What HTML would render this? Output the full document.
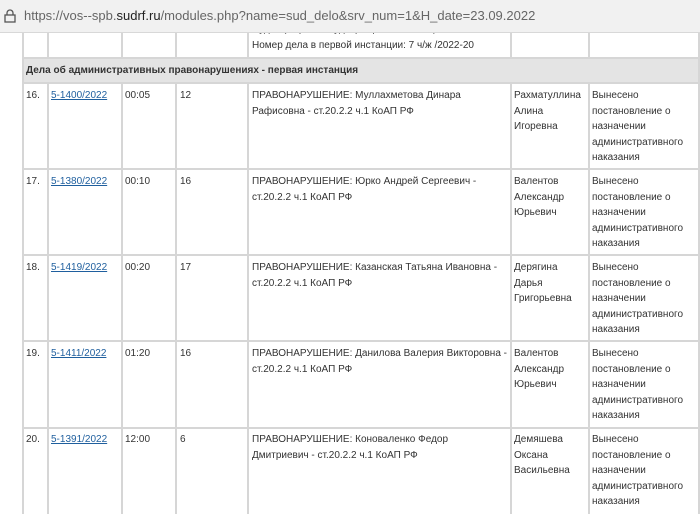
<!DOCTYPE html>
<html><head><meta charset="utf-8"><style>
*{margin:0;padding:0;box-sizing:border-box}
body{width:700px;height:514px;overflow:hidden;background:#fff;font-family:"Liberation Sans",Arial,sans-serif;font-size:10px;color:#333;position:relative}
.bar{position:absolute;left:0;top:0;width:700px;height:33px;background:#f1f1f1;border-bottom:1px solid #d8d8d8;z-index:1}
.url{position:absolute;left:24px;top:8px;font-size:13px;color:#666}
.url b{font-weight:normal;color:#222}
.v{position:absolute;width:2px;background:#d6d6d6}
.h{position:absolute;height:2px;background:#d6d6d6;left:22px;width:678px}
.c{position:absolute;line-height:15.5px}
a{color:#1f5f9e;text-decoration:underline}
.sec{position:absolute;left:22px;top:58px;width:678px;height:25px;background:#e4e4e4;font-weight:bold;padding:7px 4px;line-height:12px}
</style></head><body>
<div class="bar">
<svg style="position:absolute;left:4px;top:9px" width="12" height="14" viewBox="0 0 12 14"><rect x="1" y="6" width="10" height="7" fill="none" stroke="#555" stroke-width="1.3"/><path d="M3 6V4a3 3 0 0 1 6 0v2" fill="none" stroke="#555" stroke-width="1.3"/></svg>
<div class="url">https://vos--spb.<b>sudrf.ru</b>/modules.php?name=sud_delo&amp;srv_num=1&amp;H_date=23.09.2022</div>
</div>
<div class="sec">Дела об административных правонарушениях - первая инстанция</div>
<div class="c" style="left:252px;top:22px;color:#555">Судья (мировой судья) первой инстанции:</div>
<div class="c" style="left:252px;top:38px">Номер дела в первой инстанции: 7 ч/ж /2022-20</div>
<div class="v" style="left:22px;top:33px;height:481px"></div>
<div class="v" style="left:47px;top:33px;height:25px"></div>
<div class="v" style="left:121px;top:33px;height:25px"></div>
<div class="v" style="left:175px;top:33px;height:25px"></div>
<div class="v" style="left:247px;top:33px;height:25px"></div>
<div class="v" style="left:510px;top:33px;height:25px"></div>
<div class="v" style="left:588px;top:33px;height:25px"></div>
<div class="v" style="left:698px;top:33px;height:481px"></div>
<div class="h" style="top:57px"></div>
<div class="h" style="top:82px"></div>
<div class="v" style="left:47px;top:83px;height:431px"></div>
<div class="v" style="left:121px;top:83px;height:431px"></div>
<div class="v" style="left:175px;top:83px;height:431px"></div>
<div class="v" style="left:247px;top:83px;height:431px"></div>
<div class="v" style="left:510px;top:83px;height:431px"></div>
<div class="v" style="left:588px;top:83px;height:431px"></div>
<div class="h" style="top:168px"></div>
<div class="h" style="top:254px"></div>
<div class="h" style="top:340px"></div>
<div class="h" style="top:427px"></div>

<div class="c" style="left:26px;top:88px">16.</div>
<div class="c" style="left:51px;top:88px"><a>5-1400/2022</a></div>
<div class="c" style="left:125px;top:88px">00:05</div>
<div class="c" style="left:180px;top:88px">12</div>
<div class="c" style="left:252px;top:88px">ПРАВОНАРУШЕНИЕ: Муллахметова Динара<br>Рафисовна - ст.20.2.2 ч.1 КоАП РФ</div>
<div class="c" style="left:514px;top:88px">Рахматуллина<br>Алина<br>Игоревна</div>
<div class="c" style="left:592px;top:88px">Вынесено<br>постановление о<br>назначении<br>административного<br>наказания</div>

<div class="c" style="left:26px;top:174px">17.</div>
<div class="c" style="left:51px;top:174px"><a>5-1380/2022</a></div>
<div class="c" style="left:125px;top:174px">00:10</div>
<div class="c" style="left:180px;top:174px">16</div>
<div class="c" style="left:252px;top:174px">ПРАВОНАРУШЕНИЕ: Юрко Андрей Сергеевич -<br>ст.20.2.2 ч.1 КоАП РФ</div>
<div class="c" style="left:514px;top:174px">Валентов<br>Александр<br>Юрьевич</div>
<div class="c" style="left:592px;top:174px">Вынесено<br>постановление о<br>назначении<br>административного<br>наказания</div>

<div class="c" style="left:26px;top:260px">18.</div>
<div class="c" style="left:51px;top:260px"><a>5-1419/2022</a></div>
<div class="c" style="left:125px;top:260px">00:20</div>
<div class="c" style="left:180px;top:260px">17</div>
<div class="c" style="left:252px;top:260px">ПРАВОНАРУШЕНИЕ: Казанская Татьяна Ивановна -<br>ст.20.2.2 ч.1 КоАП РФ</div>
<div class="c" style="left:514px;top:260px">Дерягина<br>Дарья<br>Григорьевна</div>
<div class="c" style="left:592px;top:260px">Вынесено<br>постановление о<br>назначении<br>административного<br>наказания</div>

<div class="c" style="left:26px;top:346px">19.</div>
<div class="c" style="left:51px;top:346px"><a>5-1411/2022</a></div>
<div class="c" style="left:125px;top:346px">01:20</div>
<div class="c" style="left:180px;top:346px">16</div>
<div class="c" style="left:252px;top:346px">ПРАВОНАРУШЕНИЕ: Данилова Валерия Викторовна -<br>ст.20.2.2 ч.1 КоАП РФ</div>
<div class="c" style="left:514px;top:346px">Валентов<br>Александр<br>Юрьевич</div>
<div class="c" style="left:592px;top:346px">Вынесено<br>постановление о<br>назначении<br>административного<br>наказания</div>

<div class="c" style="left:26px;top:432px">20.</div>
<div class="c" style="left:51px;top:432px"><a>5-1391/2022</a></div>
<div class="c" style="left:125px;top:432px">12:00</div>
<div class="c" style="left:180px;top:432px">6</div>
<div class="c" style="left:252px;top:432px">ПРАВОНАРУШЕНИЕ: Коноваленко Федор<br>Дмитриевич - ст.20.2.2 ч.1 КоАП РФ</div>
<div class="c" style="left:514px;top:432px">Демяшева<br>Оксана<br>Васильевна</div>
<div class="c" style="left:592px;top:432px">Вынесено<br>постановление о<br>назначении<br>административного<br>наказания</div>
</body></html>
